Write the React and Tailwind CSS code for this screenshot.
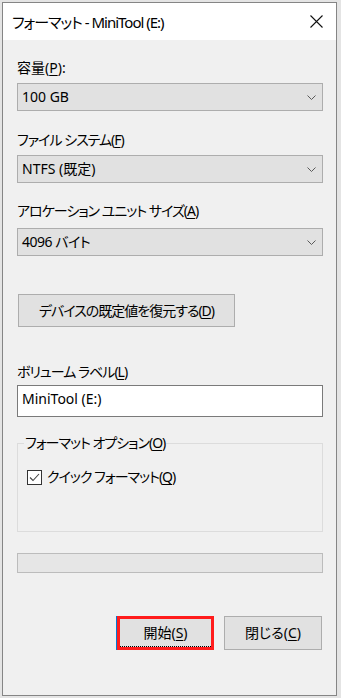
import React from 'react'

const U = ({ children }) => <span className="underline underline-offset-[2px]">{children}</span>

function Chevron() {
  return (
    <svg width="9" height="5" viewBox="0 0 9 5" className="text-[#5a5a5a]">
      <path d="M0.5 0.5 L4.5 4.5 L8.5 0.5" fill="none" stroke="currentColor" strokeWidth="1" />
    </svg>
  )
}

function Select({ value, className, textClass }) {
  return (
    <div className={'flex h-[28px] items-center justify-between border border-[#adadad] bg-[#e1e1e1] pl-[4px] pr-[6px] ' + className}>
      <span className={textClass}>{value}</span>
      <Chevron />
    </div>
  )
}

export default function App() {
  return (
    <div className="h-[698px] w-[341px] bg-[#e4e4e4] pl-[2px] pt-[2px] font-['Noto_Sans','Noto_Sans_CJK_JP',sans-serif] text-[14px] leading-[18px] tracking-[-1px] text-black [font-feature-settings:'palt']">
      <div className="flex h-[694px] w-[335px] flex-col border border-[#858585] bg-[#f0f0f0]">
        {/* title bar */}
        <div className="flex h-[37px] items-center justify-between bg-white pl-[9px] pr-[13px]">
          <span className="text-[15px]">フォーマット - MiniTool (E:)</span>
          <svg width="13" height="13" viewBox="0 0 13 13">
            <path d="M0.5 0.5 L12.5 12.5 M12.5 0.5 L0.5 12.5" stroke="#111" strokeWidth="1.1" />
          </svg>
        </div>

        <div className="flex flex-col pl-[14px] pr-[13px] pt-[19px]">
          <p className="tracking-normal">容量(<U>P</U>):</p>
          <Select className="mt-[6px]" textClass="tracking-normal" value="100 GB" />

          <p className="mt-[20px]">ファイル システム(<U>F</U>)</p>
          <Select className="mt-[6px]" textClass="tracking-normal" value="NTFS (既定)" />

          <p className="mt-[19px]">アロケーション ユニット サイズ(<U>A</U>)</p>
          <Select className="mt-[8px]" textClass="tracking-[-0.5px]" value="4096 バイト" />

          <div className="ml-[1px] mt-[38px] flex h-[33px] w-[217px] items-center justify-center border border-[#adadad] bg-[#e1e1e1]">
            デバイスの既定値を復元する(<U>D</U>)
          </div>

          <p className="mt-[36px]">ボリューム ラベル(<U>L</U>)</p>
          <div className="mt-[4px] h-[32px] border border-[#7a7a7a] bg-white pl-[4px] pt-[4px] tracking-normal">MiniTool (E:)</div>

          <fieldset className="mt-[17px] h-[98px] border border-[#dcdcdc]">
            <legend className="ml-[6px] px-[1px]">フォーマット オプション(<U>O</U>)</legend>
            <div className="mt-[16px] flex h-[18px] items-center gap-[5px] pl-[9px]">
              <div className="flex h-[15px] w-[15px] items-center justify-center border border-[#333] bg-white">
                <svg width="11" height="11" viewBox="0 0 11 11">
                  <path d="M1 5.5 L4 8.5 L10 2" fill="none" stroke="#444" strokeWidth="1.1" />
                </svg>
              </div>
              <span>クイック フォーマット(<U>Q</U>)</span>
            </div>
          </fieldset>

          <div className="mt-[21px] h-[20px] border border-[#bcbcbc] bg-[#e6e6e6]" />

          <div className="mt-[43px] flex justify-end gap-[10px] pr-[1px] tracking-normal">
            <div className="flex h-[34px] w-[97px] flex-col border-[3px] border-[#ff1c1c] bg-[#e1e1e1] shadow-[-1px_0_0_#0078d7]">
              <div className="flex flex-1 items-center justify-center border-b border-dotted border-black">
                開始(<U>S</U>)
              </div>
            </div>
            <div className="flex h-[34px] w-[98px] items-center justify-center border border-[#adadad] bg-[#e1e1e1]">
              閉じる(<U>C</U>)
            </div>
          </div>
        </div>
      </div>
    </div>
  )
}
